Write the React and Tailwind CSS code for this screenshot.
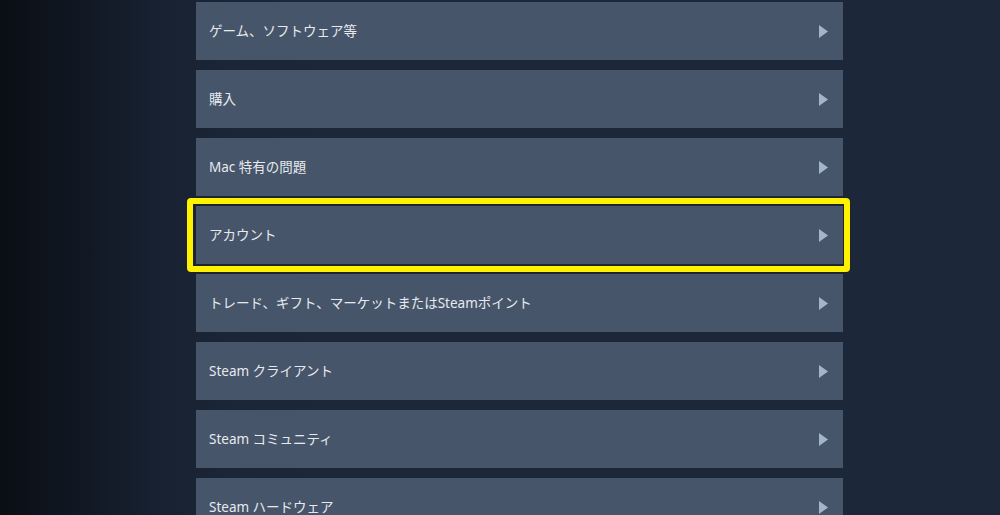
import React from 'react';

const topics = [
  'ゲーム、ソフトウェア等',
  '購入',
  'Mac 特有の問題',
  'アカウント',
  'トレード、ギフト、マーケットまたはSteamポイント',
  'Steam クライアント',
  'Steam コミュニティ',
  'Steam ハードウェア',
];

const Arrow = () => (
  <svg width="9" height="13" viewBox="0 0 9 13" className="shrink-0">
    <path d="M0 0 L9 6.5 L0 13 Z" fill="#a3b4cc" />
  </svg>
);

const TopicRow = ({ label, highlighted }) => (
  <div className="relative">
    <div className="flex h-[58px] items-center justify-between bg-[#465569] pl-[13px] pr-[15px]">
      <span className="text-[13.5px] text-[#e6eaef]">{label}</span>
      <Arrow />
    </div>
    {highlighted && (
      <div className="pointer-events-none absolute -top-[8px] -bottom-[8px] -left-[9px] -right-[7px] rounded-[4px] border-[6px] border-[#fff200] shadow-[0_0_0_1px_#222,inset_0_0_0_1px_#222]" />
    )}
  </div>
);

export default function App() {
  return (
    <div
      className="h-[515px] w-[1000px] overflow-hidden bg-[linear-gradient(to_right,#0a0e15_0%,#111823_8%,#172131_16%,#1b2638_24%,#1c283a_40%)]"
      style={{ fontFamily: '"Noto Sans", "Noto Sans CJK JP", sans-serif' }}
    >
      <div className="ml-[196px] flex w-[647px] flex-col gap-[10px] pt-[2px]">
        {topics.map((t, i) => (
          <TopicRow key={t} label={t} highlighted={i === 3} />
        ))}
      </div>
    </div>
  );
}
